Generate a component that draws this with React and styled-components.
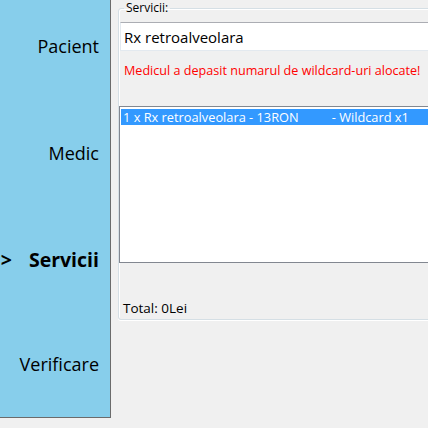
import React from "react";
import styled, { createGlobalStyle } from "styled-components";

const Global = createGlobalStyle`
  html, body { margin: 0; padding: 0; background: #f0f0f0; }
  body { font-family: "Open Sans", "Noto Sans", sans-serif; color: #000; }
`;

const Window = styled.div`
  display: flex;
  width: 428px;
  height: 428px;
  overflow: hidden;
  background: #f0f0f0;
`;

const Sidebar = styled.nav`
  flex: 0 0 111px;
  width: 111px;
  min-width: 0;
  height: 418px;
  background: #87ceeb;
  border-right: 1px solid #6b6b6b;
  border-bottom: 1px solid #6b6b6b;
  display: grid;
  grid-template-columns: minmax(0, 1fr);
  grid-template-rows: 107px 107px 104px auto;
  justify-items: end;
  align-items: start;
  padding: 34px 11px 0 0;
  box-sizing: border-box;
`;

const NavItem = styled.div`
  font-size: ${(p) => (p.$active ? "19.5px" : "18px")};
  line-height: 24px;
  font-weight: ${(p) => (p.$active ? 700 : 400)};
  color: #000;
  white-space: pre;
  display: flex;
  align-items: center;
`;

const Arrow = styled.span`
  margin-right: 17px;
`;

const Main = styled.main`
  flex: 1 0 auto;
  padding-left: 7px;
`;

const Group = styled.fieldset`
  margin: 0;
  min-width: 0;
  width: 340px;
  height: 320px;
  box-sizing: border-box;
  border: 1px solid #d5dfe5;
  border-radius: 3px;
  box-shadow: inset 1px 1px 0 #fff, 0 1px 0 #fff;
  padding: 6px 0 0 0;
  display: flex;
  flex-direction: column;
`;

const Legend = styled.legend`
  font-size: 12px;
  line-height: 16px;
  padding: 0 2px;
  margin-left: 5px;
  color: #000;
`;

const TextBox = styled.div`
  margin-left: 1px;
  height: 29px;
  box-sizing: border-box;
  background: #fff;
  border: 1px solid #e3e9ef;
  border-top-color: #abadb3;
  display: flex;
  align-items: center;
  padding-left: 3px;
  font-size: 15px;
  color: #000;
`;

const Warning = styled.div`
  margin-top: 12px;
  padding-left: 5px;
  font-size: 12.6px;
  line-height: 16px;
  color: #ff0000;
`;

const ListBox = styled.div`
  margin-top: 27px;
  height: 157px;
  box-sizing: border-box;
  background: #fff;
  border: 1px solid #828790;
  padding: 2px 0 0 1px;
`;

const ListItem = styled.div`
  height: 16px;
  display: flex;
  align-items: center;
  padding-left: 2px;
  font-size: 12.8px;
  color: ${(p) => (p.$selected ? "#fff" : "#000")};
  background: ${(p) => (p.$selected ? "#3399ff" : "transparent")};
  white-space: pre;
`;

const Extra = styled.span`
  margin-left: 33px;
`;

const Total = styled.div`
  margin-top: 36px;
  padding-left: 4px;
  font-size: 13.5px;
  line-height: 18px;
`;

export default function App() {
  return (
    <>
      <Global />
      <Window>
        <Sidebar>
          <NavItem>Pacient</NavItem>
          <NavItem>Medic</NavItem>
          <NavItem $active>
            <Arrow>&gt;</Arrow>Servicii
          </NavItem>
          <NavItem>Verificare</NavItem>
        </Sidebar>
        <Main>
          <Group>
            <Legend>Servicii:</Legend>
            <TextBox>Rx retroalveolara</TextBox>
            <Warning>Medicul a depasit numarul de wildcard-uri alocate!</Warning>
            <ListBox>
              <ListItem $selected>
                1 x Rx retroalveolara - 13RON<Extra>- Wildcard x1</Extra>
              </ListItem>
            </ListBox>
            <Total>Total: 0Lei</Total>
          </Group>
        </Main>
      </Window>
    </>
  );
}
